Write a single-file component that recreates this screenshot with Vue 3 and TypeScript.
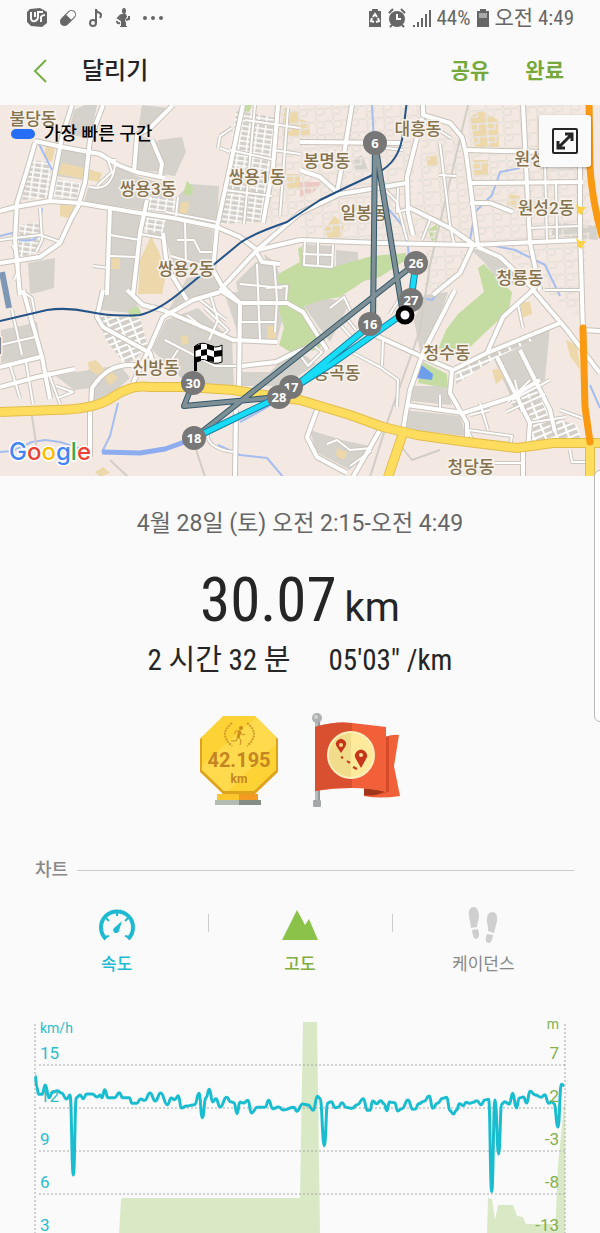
<script setup lang="ts">
import { ref } from 'vue'

type Point = [number, number]

interface Area { kind: string; points: string }
interface Label { text: string; x: number; y: number }
interface Marker { km: number; x: number; y: number }

const areas: Area[] = [
  { kind: 'urban', points: '85,105 97,105 90,139 68,134 74,110' },
  { kind: 'urban', points: '62,145 88,150 84,180 56,176' },
  { kind: 'urban', points: '137,135 158,142 161,172 136,170' },
  { kind: 'urban', points: '142,105 168,108 150,128 138,130' },
  { kind: 'urban', points: '158,140 182,137 186,152 175,176 162,174' },
  { kind: 'urban', points: '88,188 105,186 118,165 136,176 172,186 174,214 84,202' },
  { kind: 'urban', points: '190,184 219,186 217,224 178,215 178,196' },
  { kind: 'urban', points: '112,211 140,215 133,292 109,292' },
  { kind: 'urban', points: '145,214 213,230 211,266 176,272 166,240 148,234' },
  { kind: 'urban', points: '28,263 55,258 54,288 40,292 30,294' },
  { kind: 'urban', points: '264,254 275,262 285,292 274,294' },
  { kind: 'urban', points: '105,290 127,290 138,305 130,313 101,310' },
  { kind: 'urban', points: '166,320 198,308 232,340 234,388 190,386 152,350' },
  { kind: 'urban', points: '187,278 212,274 226,294 196,298 166,314' },
  { kind: 'urban', points: '236,282 256,262 274,262 285,285 287,303 240,303' },
  { kind: 'urban', points: '224,292 275,292 285,310 277,340 240,340' },
  { kind: 'urban', points: '25,325 37,322 42,355 1,363 1,330' },
  { kind: 'urban', points: '56,376 88,370 120,365 130,378 112,394 92,404 92,388 74,390' },
  { kind: 'urban', points: '242,372 270,372 284,358 306,356 316,364 284,386 242,386' },
  { kind: 'urban', points: '304,306 324,298 350,302 330,342 318,326' },
  { kind: 'urban', points: '409,386 446,386 452,405 410,401' },
  { kind: 'urban', points: '405,410 460,416 466,436 404,429' },
  { kind: 'urban', points: '492,355 550,326 545,380 512,400' },
  { kind: 'urban', points: '467,246 490,256 510,265 520,287 498,280 484,262' },
  { kind: 'urban', points: '310,430 342,440 370,446 350,470 316,452' },
  { kind: 'urban', points: '336,250 358,252 358,266 336,266' },
  { kind: 'urban', points: '304,244 332,246 332,266 304,264' },
  { kind: 'urban', points: '350,160 362,155 368,169 356,170' },
  { kind: 'urban', points: '552,222 596,226 598,240 552,236' },
  { kind: 'urban', points: '424,295 448,292 436,330 420,352 414,320' },
  { kind: 'sand', points: '46,145 55,149 52,162 44,158' },
  { kind: 'sand', points: '62,163 84,168 102,173 99,182 58,174' },
  { kind: 'sand', points: '60,204 76,206 68,218 60,216' },
  { kind: 'sand', points: '181,202 189,202 187,216 179,214' },
  { kind: 'sand', points: '151,236 159,252 166,275 162,294 138,294 140,260' },
  { kind: 'sand', points: '111,256 120,258 120,269 110,269' },
  { kind: 'sand', points: '244,144 253,146 252,153 243,152' },
  { kind: 'sand', points: '284,108 300,112 300,138 282,134' },
  { kind: 'sand', points: '286,174 300,174 300,190 286,188' },
  { kind: 'sand', points: '229,213 242,213 240,221 227,220' },
  { kind: 'sand', points: '300,119 309,122 310,135 300,138' },
  { kind: 'sand', points: '470,117 480,110 498,120 499,147 475,147' },
  { kind: 'sand', points: '474,160 488,160 488,176 474,176' },
  { kind: 'sand', points: '426,157 436,155 438,165 428,168' },
  { kind: 'sand', points: '508,194 520,196 518,208 507,206' },
  { kind: 'sand', points: '324,230 334,216 344,224 342,238 330,242' },
  { kind: 'sand', points: '88,362 96,360 105,370 98,375 89,370' },
  { kind: 'sand', points: '104,376 112,372 118,378 110,386' },
  { kind: 'sand', points: '180,337 187,335 189,343 182,345' },
  { kind: 'sand', points: '268,326 276,326 276,340 267,340' },
  { kind: 'sand', points: '520,302 530,302 532,314 522,318' },
  { kind: 'sand', points: '492,370 502,368 504,378 496,384' },
  { kind: 'sand', points: '337,448 347,452 344,460 336,456' },
  { kind: 'sand', points: '566,340 577,345 580,370 570,356' },
  { kind: 'sand', points: '95,472 103,467 110,473 100,477' },
  { kind: 'park', points: '275,280 280,273 300,262 298,249 302,246 304,265 333,267 372,256 406,253 406,260 380,277 364,281 340,297 322,300 304,306 312,322 325,340 318,350 290,352 279,345 284,328 278,306 287,303 286,288' },
  { kind: 'park', points: '478,268 484,264 498,279 512,292 509,310 488,330 470,347 437,352 446,330 458,314 484,292' },
  { kind: 'park', points: '423,362 447,374 448,388 418,383' },
  { kind: 'park', points: '428,230 437,224 438,236 432,242' },
  { kind: 'park', points: '187,181 193,187 192,196 183,194' },
  { kind: 'park', points: '244,105 252,105 249,112 244,111' },
  { kind: 'park', points: '128,310 138,306 142,315 130,318' },
  { kind: 'rose', points: '300,182 322,182 314,192 300,197' },
  { kind: 'water', points: '419,363 433,374 432,380 416,378' },
]

const blocks: Area[] = [
  { kind: 'tight', points: '33,160 52,163 48,198 20,200' },
  { kind: 'tight', points: '54,178 82,184 78,200 52,197' },
  { kind: 'tight', points: '143,216 166,220 162,234 142,230' },
  { kind: 'tight', points: '146,196 176,200 174,212 145,210' },
  { kind: 'tight', points: '236,110 276,118 262,222 220,224' },
  { kind: 'tight', points: '20,225 42,222 40,252 18,258' },
  { kind: 'slant', points: '97,316 140,318 148,348 126,366 106,340' },
  { kind: 'slant', points: '457,366 486,352 534,330 538,338 496,358 456,384' },
  { kind: 'slant', points: '505,400 540,382 556,420 576,424 582,440 530,444 534,420' },
  { kind: 'loose', points: '276,105 300,105 300,212 264,226' },
  { kind: 'loose', points: '300,105 420,105 408,240 300,238' },
  { kind: 'loose', points: '424,122 460,140 476,246 412,238' },
  { kind: 'loose', points: '466,105 588,105 590,240 480,245' },
  { kind: 'loose', points: '500,246 586,244 584,320 540,288' },
  { kind: 'loose', points: '418,250 468,250 452,284 425,292' },
]

const minorRoads: string[] = [
  'M0,240 L15,238 40,235 60,242', 'M40,208 L42,240 36,252', 'M12,245 Q24,262 14,280',
  'M110,235 L140,240', 'M110,256 L136,257', 'M93,266 L110,268', 'M140,234 L163,238',
  'M185,220 L186,266', 'M177,240 L194,240 200,252 212,252', 'M171,256 L211,268',
  'M230,150 L275,160', 'M225,190 L272,196', 'M220,136 L232,128 M220,148 L230,152 M220,136 L218,148',
  'M245,120 L300,128', 'M255,105 L244,224', 'M288,108 L280,215', 'M273,150 L300,154',
  'M97,186 L112,172 108,160 116,160', 'M115,165 Q112,192 90,187', 'M178,197 L176,216', 'M166,212 L217,222',
  'M305,240 L304,265 332,267 333,245', 'M318,242 L318,266', 'M303,254 L332,255',
  'M380,185 L397,202 407,240', 'M398,188 L397,212 412,208', 'M386,148 L403,150',
  'M440,144 L450,225 454,244', 'M423,120 L451,138', 'M439,175 L456,176', 'M430,220 L422,240',
  'M545,163 L547,240', 'M556,182 L557,240', 'M528,228 L580,226', 'M530,207 L552,206',
  'M20,290 L32,298 35,315', 'M12,310 L22,355 M0,345 L35,337', 'M10,365 L20,398 M26,362 L33,404',
  'M48,372 L60,404', 'M56,386 L73,392 58,398', 'M165,340 L215,366 236,366', 'M187,315 L200,325 M178,350 L166,368',
  'M211,297 L218,320 209,340', 'M240,284 L282,288 M257,264 L260,340 M274,262 L277,300 275,332', 'M240,322 L276,322', 'M200,300 L226,320',
  'M205,308 L228,330 222,336 210,330', 'M266,288 L287,286 286,300',
  'M233,452 Q205,448 208,432', 'M353,353 L380,367 398,380 397,407', 'M383,340 L382,366', 'M300,355 L308,366 322,352 314,346',
  'M330,308 L344,297 352,314 M338,322 L352,338 M356,330 L345,316',
  'M404,292 L390,314', 'M440,395 L440,410', 'M480,403 L488,430', 'M470,415 L490,410 M468,430 L512,436 510,446 472,440 Z',
  'M508,402 L530,380 M506,412 L545,394 M515,380 L522,412', 'M528,423 L566,417 M560,410 L582,418',
  'M550,380 L512,400', 'M327,444 L337,440 350,450 372,448', 'M350,466 L371,451', 'M570,450 L572,462 590,462',
  'M495,463 L523,463', 'M518,305 L523,328', 'M545,290 L583,290',
]

const mainRoads: string[] = [
  'M35,141 L62,147 100,154 118,165 136,172 165,178', 'M0,211 L15,207 50,201 80,203 133,212 173,218 217,227 240,237 257,250 300,240',
  'M72,105 L62,137 50,199', 'M103,105 L90,140 85,183 79,203', 'M35,143 L28,167 17,203 15,240 20,295', 'M0,263 L40,257 60,243 72,217 80,203',
  'M110,207 L107,295', 'M147,200 L140,233 133,295', 'M173,105 L150,128 137,135 134,172', 'M152,140 L162,164 160,176',
  'M243,105 L230,167 217,227 213,270', 'M278,105 L273,167 263,223', 'M257,250 L220,290', 'M213,270 L222,286 240,303',
  'M255,250 L262,262 280,264', 'M163,233 L167,267 187,300', 'M352,105 L343,160 337,193', 'M300,170 L320,177 338,193', 'M257,250 L300,213 340,194 383,187 407,183',
  'M423,105 L423,115 450,123 462,137 466,153 470,183 478,247', 'M422,118 L407,177 408,213 413,235', 'M467,150 L540,152', 'M523,105 L530,243 540,290',
  'M470,183 L583,182', 'M580,163 L580,233 583,330', 'M300,240 L380,243 473,245 580,240', 'M473,245 L460,273 433,295', 'M477,247 L500,257 517,273 535,290',
  'M408,207 L450,228 473,244', 'M300,142 L403,143', 'M470,203 L490,203 513,212', 'M23,290 L42,357 50,399', 'M0,367 L40,357', 'M0,387 L37,377 75,369',
  'M103,290 L97,317 103,327 150,353 155,370', 'M127,290 L143,305 163,310 233,340 277,342', 'M220,292 L193,300 163,317 150,347 133,383', 'M220,290 L240,303 287,303 303,312 327,350',
  'M240,303 L239,389', 'M242,366 L276,362 292,354 306,348', 'M140,366 Q110,360 92,388 L91,407', 'M90,410 L90,457', 'M455,290 L423,353 410,390 403,430',
  'M370,333 L425,358 453,370 487,353 503,317 533,290 567,330 600,373', 'M487,353 L560,323', 'M497,357 L530,423 528,447', 'M520,350 L550,410 555,432',
  'M452,370 L450,393 467,423 467,440', 'M407,405 L463,413 510,398 540,380', 'M523,450 L523,477', 'M317,410 L307,437 317,457 347,473', 'M380,430 L353,477', 'M236,410 L235,477', 'M583,330 L600,331',
]

const highways: string[] = [
  'M0,412 L53,410 Q95,410 113,397 T150,387 L187,387 233,390 277,397 300,400 350,415 383,427 417,435 467,442 517,448 553,443 600,443',
  'M403,433 L388,477', 'M590,443 L590,477',
]

const streams: string[] = [
  'M372,105 L375,160 385,205 402,225 408,246 409,260', 'M520,168 L500,172 492,195 475,212 470,240', 'M490,245 L515,250 545,265 560,296',
  'M39,144 L52,170', 'M42,208 L40,222', 'M0,236 L12,233 20,240 Q34,242 38,236', 'M118,403 L110,436 102,452',
  'M0,452 L12,451 32,442 45,440 60,442 85,450', 'M218,445 L240,455 267,458 284,478', 'M590,385 L600,408', 'M450,278 L432,300 412,296',
  'M240,422 L262,410 276,402',
]

const placeLabels: Label[] = [
  { text: '불당동', x: 33, y: 125 }, { text: '쌍용3동', x: 148, y: 195 }, { text: '쌍용1동', x: 257, y: 183 },
  { text: '쌍용2동', x: 186, y: 275 }, { text: '대흥동', x: 418, y: 135 }, { text: '봉명동', x: 327, y: 167 },
  { text: '일봉동', x: 364, y: 219 }, { text: '원성동', x: 538, y: 165 }, { text: '원성2동', x: 546, y: 214 },
  { text: '청룡동', x: 520, y: 284 }, { text: '청수동', x: 447, y: 359 }, { text: '용곡동', x: 337, y: 379 },
  { text: '신방동', x: 156, y: 374 }, { text: '청당동', x: 471, y: 473 }, { text: '리', x: -5, y: 352 },
]

const markers: Marker[] = [
  { km: 6, x: 375, y: 143 }, { km: 26, x: 416, y: 263 }, { km: 27, x: 411, y: 300 }, { km: 16, x: 370, y: 324 },
  { km: 17, x: 291, y: 387 }, { km: 28, x: 279, y: 397 }, { km: 18, x: 194, y: 438 }, { km: 30, x: 193, y: 383 },
]

const SAMPLES_PER_PIXEL = 3
const speedSamples: Point[] = [
  [106, 212], [110, 245], [116, 268], [126, 268], [136, 240], [147, 278], [158, 262], [172, 257], [184, 264], [200, 282], [210, 270],
  [220, 510], [229, 278], [240, 270], [250, 281], [260, 267], [276, 267], [292, 276], [300, 270], [306, 278], [314, 254], [324, 278], [344, 278], [358, 263], [368, 278], [388, 278],
  [396, 295], [410, 295], [422, 282], [434, 286], [450, 264], [466, 288], [482, 264], [502, 299], [514, 279], [524, 284], [535, 272], [544, 309], [560, 303], [584, 299],
  [597, 265], [607, 338], [618, 278], [628, 253], [638, 291], [648, 281], [660, 306], [680, 277], [692, 290], [702, 293], [711, 326], [720, 291], [730, 294], [744, 286], [754, 324], [772, 307], [796, 306], [806, 286],
  [818, 311], [836, 306], [850, 315], [882, 307], [890, 319], [908, 297], [924, 300], [940, 316], [952, 274], [960, 280], [973, 422], [983, 294], [994, 290],
  [1005, 308], [1014, 307], [1026, 293], [1038, 307], [1056, 310], [1072, 299], [1090, 281], [1102, 316], [1110, 316], [1118, 288], [1130, 296], [1142, 287],
  [1152, 296], [1161, 317], [1168, 291], [1184, 293], [1193, 318], [1206, 311], [1224, 285], [1238, 313], [1246, 312], [1256, 296], [1272, 289], [1288, 273], [1298, 310],
  [1312, 295], [1328, 280], [1340, 277], [1350, 317], [1360, 327], [1370, 315], [1378, 296], [1390, 302], [1398, 292], [1410, 295], [1420, 292], [1430, 287], [1444, 299], [1454, 285], [1466, 283],
  [1475, 560], [1485, 285], [1496, 447], [1505, 297], [1514, 290], [1528, 297], [1538, 265], [1549, 309], [1558, 279], [1570, 276], [1580, 294], [1590, 259],
  [1606, 270], [1624, 277], [1634, 269], [1646, 295], [1656, 290], [1662, 296], [1674, 366], [1684, 238], [1693, 242],
]

function smoothPath(points: Point[]): string {
  const at = (i: number) => points[i].map(v => v / SAMPLES_PER_PIXEL)
  let d = `M${at(0).join(',')}`
  for (let i = 1; i < points.length; i++) {
    const [x0, y0] = at(i - 1)
    const [x1, y1] = at(i)
    const mid = (x0 + x1) / 2
    d += ` C${mid},${y0} ${mid},${y1} ${x1},${y1}`
  }
  return d
}

const speedPath = smoothPath(speedSamples)

const gridRows = [
  { y: 60, speed: '15', altitude: '7' },
  { y: 103, speed: '12', altitude: '2' },
  { y: 146, speed: '9', altitude: '-3' },
  { y: 189, speed: '6', altitude: '-8' },
  { y: 232, speed: '3', altitude: '-13' },
]

const tabs = [
  { id: 'speed', label: '속도' },
  { id: 'altitude', label: '고도' },
  { id: 'cadence', label: '케이던스' },
]
const active = ref<Record<string, boolean>>({ speed: true, altitude: true, cadence: false })
function toggle(id: string) {
  active.value[id] = !active.value[id]
}
</script>

<template>
  <div class="screen">
    <div class="status-bar">
      <div class="status-left">
        <svg width="22" height="20" viewBox="0 0 22 20">
          <path class="ink" d="M4 1 L14 0 21 4 V15 L16 19 5 18 1 14 V4 Z" />
          <path d="M5 4 V10 Q5 14 9 13 Q12 12 12 9 V4 H17 M9 4 V9 M15 14 V9 Q16 7 19 7" fill="none" stroke="#fafafa" stroke-width="2" />
        </svg>
        <svg width="18" height="18" viewBox="0 0 18 18">
          <g transform="rotate(45 9 9)">
            <rect x="5" y="0" width="8" height="18" rx="4" fill="none" stroke="#666" stroke-width="1" />
            <path class="ink" d="M5 8 H13 V14 A4 4 0 0 1 5 14 Z" />
          </g>
        </svg>
        <svg width="16" height="20" viewBox="0 0 16 20">
          <circle cx="5" cy="15" r="3" fill="none" stroke="#666" stroke-width="2" />
          <path d="M8 15 V1 Q8 4 12 5 Q14 7 12 10" fill="none" stroke="#666" stroke-width="2" />
        </svg>
        <svg width="16" height="20" viewBox="0 0 16 20">
          <ellipse class="ink" cx="9" cy="3" rx="2" ry="3" />
          <path class="ink" d="M6 6 H11 L12 9 10 12 11 15 V18 H12 V19 H5 V18 H6 V14 Q4 10 6 6 Z" />
          <path d="M6 7 L3 10 6 12 M11 12 L14 11 14 8 M2 13 Q2 16 5 15" fill="none" stroke="#666" stroke-width="2" />
        </svg>
        <svg class="more-dots" width="22" height="20" viewBox="0 0 22 20">
          <circle cx="3" cy="10" r="2" /><circle cx="11" cy="10" r="2" /><circle cx="19" cy="10" r="2" />
        </svg>
      </div>
      <div class="status-right">
        <svg width="14" height="20" viewBox="0 0 14 20">
          <path class="ink" d="M4 1 H10 V3 H13 V19 H1 V3 H4 Z" />
          <path d="M5 9 L7 6 9 9 M10 10 L11 13 8 14 M6 14 L3 13 4 10" fill="none" stroke="#fafafa" stroke-width="2" />
        </svg>
        <svg width="20" height="20" viewBox="0 0 20 20">
          <circle class="ink" cx="10" cy="11" r="8" />
          <path d="M2 5 L6 1 M18 5 L14 1 M5 17 L3 19 M15 17 L17 19" stroke="#666" stroke-width="2" />
          <path d="M10 6 V11 H14" fill="none" stroke="#fafafa" stroke-width="2" />
        </svg>
        <svg width="20" height="20" viewBox="0 0 20 20">
          <path d="M2 19 V17 M6 19 V14 M10 19 V10 M14 19 V6 M18 19 V2" stroke="#666" stroke-width="2" />
        </svg>
        <span>44%</span>
        <svg width="14" height="20" viewBox="0 0 14 20">
          <path class="ink" d="M4 1 H10 V3 H13 V19 H1 V3 H4 Z" />
          <path d="M3 5 H11 V10 H3 Z" fill="#aaa" />
        </svg>
        <span>오전 4:49</span>
      </div>
    </div>

    <header class="app-bar">
      <button class="back" type="button" aria-label="뒤로">
        <svg width="16" height="24" viewBox="0 0 16 24">
          <path d="M14 1 L3 12 14 23" fill="none" stroke="#76b043" stroke-width="2" />
        </svg>
      </button>
      <h1>달리기</h1>
      <button class="action" type="button">공유</button>
      <button class="action" type="button">완료</button>
    </header>

    <section class="map">
      <svg class="map-canvas" viewBox="0 105 600 371">
        <defs>
          <pattern id="tight" width="8" height="5" patternUnits="userSpaceOnUse" patternTransform="rotate(8)">
            <rect width="8" height="5" fill="#d3cfc8" /><path d="M0 0 H8 M0 0 V5" stroke="#fff" stroke-width="3" />
          </pattern>
          <pattern id="slant" width="11" height="6" patternUnits="userSpaceOnUse" patternTransform="rotate(-22)">
            <rect width="11" height="6" fill="#d3cfc8" /><path d="M0 0 H11 M0 0 V6" stroke="#fff" stroke-width="4" />
          </pattern>
          <pattern id="loose" width="17" height="13" patternUnits="userSpaceOnUse" patternTransform="rotate(-4)">
            <path d="M0 1 H17 M1 0 V13 M9 1 V7 M1 7 H9" fill="none" stroke="#d6ccc3" stroke-width="2" />
            <path d="M0 1 H17 M1 0 V13 M9 1 V7 M1 7 H9" fill="none" stroke="#faf6f0" stroke-width="1" />
          </pattern>
        </defs>
        <rect class="land" y="105" width="600" height="371" />
        <polygon v-for="(a, i) in areas" :key="'a' + i" :class="a.kind" :points="a.points" />
        <polygon v-for="(b, i) in blocks" :key="'b' + i" :class="b.kind" :points="b.points" />
        <path v-for="(d, i) in streams" :key="'s' + i" class="stream" :d="d" />
        <path class="river" d="M102,452 L140,453 165,449 190,440" />
        <path class="rail" d="M468,105 L430,265 420,330 388,420 370,477 M32,416 L37,450 M110,460 L128,477 M193,440 L205,477 M400,445 L412,460 440,450" />
        <path v-for="(d, i) in minorRoads" :key="'mc' + i" class="minor-case" :d="d" />
        <path v-for="(d, i) in mainRoads" :key="'rc' + i" class="main-case" :d="d" />
        <path v-for="(d, i) in minorRoads" :key="'m' + i" class="minor" :d="d" />
        <path v-for="(d, i) in mainRoads" :key="'r' + i" class="main" :d="d" />
        <path v-for="(d, i) in highways" :key="'hc' + i" class="highway-case" :d="d" />
        <path v-for="(d, i) in highways" :key="'h' + i" class="highway" :d="d" />
        <path class="trunk" d="M589,100 L590,167 Q592,200 602,236 M583,328 L585,407 590,442" />
        <path d="M2,272 L9,308" fill="none" stroke="#7d97b5" stroke-width="6" />
        <path class="railway" d="M0,321 L47,310 Q67,307 90,312 T140,315 Q160,310 183,290 L240,243 Q252,234 287,222 L320,200 347,187 377,173 Q400,162 403,133 L407,100" />
        <path d="M576,204 l4,3 6,0 -3,4 -1,4 -4,-2 z M576,238 l4,3 6,0 -3,4 -1,4 -4,-2 z" fill="#fbd145" />

        <text v-for="l in placeLabels" :key="l.text" class="place" :x="l.x" :y="l.y">{{ l.text }}</text>

        <g class="route">
          <path class="edge" d="M375,143 L373,324 M375,143 L403,314 M416,263 L194,438 M279,397 L184,406 193,383" />
          <path class="slow" d="M375,143 L373,324 M375,143 L403,314 M416,263 L194,438 M279,397 L184,406 193,383" />
          <path class="fast-edge" d="M194,438 L279,397 333,363 404,313 M291,390 L368,327 M416,263 L411,300" />
          <path class="fast" d="M194,438 L279,397 333,363 404,313 M291,390 L368,327 M416,263 L411,300" />
        </g>
        <g v-for="m in markers" :key="m.km" class="marker">
          <circle :cx="m.x" :cy="m.y" r="12" />
          <text :x="m.x" :y="m.y + 5">{{ m.km }}</text>
        </g>
        <circle cx="405" cy="315" r="7" fill="#fff" stroke="#000" stroke-width="5" />
        <g>
          <path d="M194,346 H197 V371 H194 Z" />
          <path d="M195,346 Q202,341 209,345 T222,345 V362 Q215,365 208,361 T195,363 Z" fill="#fff" stroke="#000" stroke-width="1" />
          <path d="M195,346 l6,-2 v5 l-6,2 z M207,344 l7,2 v5 l-7,-2 z M201,350 l6,-1 v6 l-6,1 z M214,351 l8,-1 v6 l-8,1 z M195,357 l6,-1 v5 l-6,2 z M207,355 l7,2 v5 l-7,-1 z" />
        </g>
        <text class="google" x="9" y="460"><tspan fill="#4285f4">G</tspan><tspan fill="#ea4335">o</tspan><tspan fill="#fbbc05">o</tspan><tspan fill="#4285f4">g</tspan><tspan fill="#34a853">l</tspan><tspan fill="#ea4335">e</tspan></text>
      </svg>
      <div class="legend"><i class="swatch"></i><span>가장 빠른 구간</span></div>
      <button class="expand" type="button" aria-label="지도 확대">
        <svg width="26" height="26" viewBox="0 0 26 26" fill="none" stroke="#252525">
          <rect x="1" y="1" width="24" height="24" rx="1" stroke-width="2" />
          <path d="M7 19 L19 7 M13 6 H20 V13 M6 13 V20 H13" stroke-width="3" />
        </svg>
      </button>
    </section>
    <div class="edge-handle"></div>

    <section class="summary">
      <p class="date">4월 28일 (토) 오전 2:15-오전 4:49</p>
      <p class="distance"><span class="value">30.07</span><span class="unit">km</span></p>
      <p class="pace"><span>2 시간 32 분</span><span>05'03" /km</span></p>
      <div class="badges">
        <svg width="80" height="96" viewBox="0 0 80 96">
          <rect x="18" y="82" width="41" height="8" fill="#fcc62d" /><rect x="40" y="82" width="19" height="8" fill="#f39a25" />
          <rect x="16" y="88" width="46" height="5" fill="#b4bbb1" /><rect x="40" y="88" width="22" height="5" fill="#858d87" />
          <polygon points="24,5 56,5 79,27 79,60 56,82 24,82 1,60 1,27" fill="#dfa21d" />
          <polygon points="24,4 56,4 77,25 77,58 55,79 25,79 3,58 3,25" fill="#fdd235" />
          <polygon points="58,5 77,25 77,32 29,79 25,79 3,58 3,53" fill="#ffdf5c" opacity="0.6" />
          <path d="M33 11 Q19 22 33 34 M48 11 Q62 22 48 34" fill="none" stroke="#d29a2a" stroke-width="2" stroke-dasharray="2 1" />
          <circle cx="42" cy="16" r="2" fill="#cc8d1d" />
          <path d="M41 18 L39 25 42 28 41 33 M39 25 L37 29 32 29 M41 19 L37 19 35 22 M41 20 L44 23 46 22" fill="none" stroke="#cc8d1d" stroke-width="1" />
          <path d="M41 19 L39 26" stroke="#cc8d1d" stroke-width="3" />
          <text class="medal-value" x="40" y="55">42.195</text>
          <text class="medal-unit" x="40" y="71">km</text>
        </svg>
        <svg width="90" height="96" viewBox="0 0 90 96">
          <rect x="3" y="9" width="5" height="80" fill="#b8bbbb" /><rect x="6" y="9" width="2" height="80" fill="#929797" />
          <circle cx="5" cy="6" r="5" fill="#aeb1b1" /><circle cx="4" cy="5" r="2" fill="#d3d5d5" />
          <rect x="1" y="88" width="8" height="7" rx="1" fill="#a4a8a8" />
          <path d="M73 25 Q81 22 87 23 L82 54 88 84 Q68 87 52 84 V77 L73 80 Z" fill="#f06139" />
          <path d="M73 25 L77 24 V80 L60 84 V77 L73 80 Z" fill="#d64c2a" />
          <path d="M52 76 L74 79 Q62 85 52 83 Z" fill="#9f3519" />
          <path d="M3 15 Q22 9 40 11 T74 15 V80 Q58 76 40 76 T3 79 Z" fill="#f16039" />
          <path d="M3 15 Q22 9 40 11 V76 Q22 75 3 79 Z" fill="#d95031" />
          <circle cx="39" cy="43" r="24" fill="#fff0bd" /><circle cx="39" cy="43" r="22" fill="#ffe99a" />
          <path d="M39 21 A22 22 0 0 0 39 65 Z" fill="#f0dc8b" />
          <path fill-rule="evenodd" d="M29 41 L25 35 A5 5 0 1 1 33 35 Z M29 31 A2 2 0 1 0 29 35 A2 2 0 0 0 29 31 Z M49 56 L44 47 A6 6 0 1 1 54 47 Z M49 41 A2 2 0 1 0 49 45 A2 2 0 0 0 49 41 Z" fill="#c7361b" />
          <path d="M29 45 L31 46 M35 49 L38 51 M41 55 L45 57" stroke="#c7361b" stroke-width="2" />
        </svg>
      </div>
    </section>

    <section class="charts">
      <h2>차트</h2>
      <div class="tabs">
        <button v-for="t in tabs" :key="t.id" type="button" class="tab" :class="t.id" :aria-pressed="active[t.id]" @click="toggle(t.id)">
          <svg v-if="t.id === 'speed'" width="38" height="38" viewBox="0 0 38 38">
            <path d="M8 33 A16 16 0 1 1 30 33" fill="none" stroke="#1fbad2" stroke-width="4" />
            <path d="M19 5 V10 M8 12 L11 15 M30 12 L27 15 M6 31 L11 30 M32 31 L27 30" stroke="#1fbad2" stroke-width="2" />
            <path d="M24 15 L21 25 A3 3 0 1 1 16 22 Z" fill="#1fbad2" />
          </svg>
          <svg v-else-if="t.id === 'altitude'" width="38" height="38" viewBox="0 0 38 38">
            <path d="M1 34 L16 4 24 19 28 13 37 34 Z" fill="#8bc34a" />
          </svg>
          <svg v-else width="38" height="38" viewBox="0 0 38 38" fill="#cfcfcf">
            <path d="M10 1 C4 1 4 8 6 15 L7 22 13 21 C13 17 15 14 15 9 Q14 1 10 1 Z M8 24 L14 23 Q17 32 12 33 Q9 33 8 24 Z" />
            <path d="M28 6 C34 6 34 14 32 19 L30 27 24 25 C25 21 22 17 23 12 Q24 6 28 6 Z M23 28 L29 29 Q28 38 24 37 Q20 36 23 28 Z" />
          </svg>
          <span>{{ t.label }}</span>
        </button>
      </div>
      <svg class="chart" viewBox="0 0 600 228" role="img" aria-label="속도와 고도 차트">
        <path class="altitude-area" d="M119,230 L121,195 Q121,193 123,193 L300,193 303,17 317,17 320,230 Z M487,230 L488,193 492,194 495,215 498,200 513,200 517,211 523,212 526,219 552,219 556,230 Z M555,230 L558,160 565,92 565,230 Z" />
        <path class="grid" d="M35,19 V230 M565,19 V230" />
        <path v-for="r in gridRows" :key="r.y" class="grid" :d="`M39,${r.y} H565`" />
        <path class="speed-line" :d="speedPath" />
        <text class="speed-text" x="40" y="28">km/h</text>
        <text class="altitude-text" x="559" y="24">m</text>
        <template v-for="r in gridRows" :key="r.speed">
          <text class="speed-text value" x="40" :y="r.y - 6">{{ r.speed }}</text>
          <text class="altitude-text value" x="559" :y="r.y - 6">{{ r.altitude }}</text>
        </template>
      </svg>
    </section>
  </div>
</template>

<style>
body {
  background: #fafafa;
}
</style>

<style scoped>
.screen {
  position: relative;
  overflow: hidden;
  background: #fafafa;
  color: #252525;
  font-family: Roboto, "Noto Sans CJK KR", sans-serif;
}
button {
  padding: 0;
  border: 0;
  background: none;
  font-family: inherit;
  cursor: pointer;
}
h1, h2, p {
  margin: 0;
}
svg {
  display: block;
}
.status-bar {
  display: flex;
  justify-content: space-between;
  align-items: center;
  height: 36px;
  padding: 0 26px;
  color: #666;
  font-family: "Roboto Condensed", Roboto, "Noto Sans CJK KR", sans-serif;
  font-size: 21px;
  line-height: 36px;
}
.status-left {
  display: flex;
  align-items: center;
  gap: 11px;
}
.status-right {
  display: flex;
  align-items: center;
  gap: 5px;
}
.ink, .more-dots {
  fill: #666;
}
.app-bar {
  display: flex;
  align-items: center;
  height: 69px;
  padding: 0 36px 0 32px;
}
.back {
  width: 50px;
}
.app-bar h1 {
  flex: 1;
  font-size: 24px;
  font-weight: 500;
  line-height: 32px;
}
.action {
  margin-left: 36px;
  color: #76a83c;
  font-size: 21px;
  font-weight: 700;
  line-height: 32px;
}
.map {
  position: relative;
}
.map-canvas {
  width: 100%;
}
.land { fill: #f3e9e2; }
.urban { fill: #d5d2cb; }
.sand { fill: #ecd8aa; }
.park { fill: #c4dba2; }
.rose { fill: #ecc9c4; }
.water { fill: #6f9fec; }
.tight { fill: url(#tight); }
.slant { fill: url(#slant); }
.loose { fill: url(#loose); }
.stream, .river, .rail, .minor-case, .main-case, .minor, .main, .highway-case, .highway, .trunk, .railway, .route path {
  fill: none;
  stroke-linejoin: round;
}
.stream { stroke: #a6bdf0; stroke-width: 2; }
.river { stroke: #8eacf0; stroke-width: 5; }
.rail { stroke: #d2cdc7; stroke-width: 2; }
.minor-case { stroke: #cbc6be; stroke-width: 4; }
.minor { stroke: #fff; stroke-width: 2; }
.main-case { stroke: #c8c3bb; stroke-width: 6; }
.main { stroke: #fff; stroke-width: 4; }
.highway-case { stroke: #e3bd4b; stroke-width: 10; }
.highway { stroke: #fddc5e; stroke-width: 8; }
.trunk { stroke: #f99a12; stroke-width: 7; stroke-linecap: round; }
.railway { stroke: #245388; stroke-width: 2; }
.place {
  fill: #85734f;
  stroke: #f8f2ec;
  stroke-width: 3px;
  paint-order: stroke;
  font-size: 17px;
  font-weight: 500;
  text-anchor: middle;
}
.route .edge { stroke: #33586b; stroke-width: 6; }
.route .slow { stroke: #7f8f96; stroke-width: 4; }
.route .fast-edge { stroke: #1d7fa0; stroke-width: 7; }
.route .fast { stroke: #16dcf7; stroke-width: 5; }
.marker circle {
  fill: #777;
}
.marker text {
  fill: #fff;
  font-family: "Open Sans", sans-serif;
  font-size: 13px;
  font-weight: 700;
  text-anchor: middle;
}
.google {
  stroke: #fff;
  stroke-width: 3px;
  paint-order: stroke;
  font-family: Inter, sans-serif;
  font-size: 24px;
  font-weight: 500;
}
.legend {
  position: absolute;
  top: 16px;
  left: 11px;
  display: flex;
  align-items: center;
  gap: 9px;
  color: #000;
  font-size: 18px;
  font-weight: 500;
  line-height: 26px;
}
.swatch {
  width: 24px;
  height: 10px;
  border-radius: 5px;
  background: #256ef5;
}
.expand {
  position: absolute;
  top: 10px;
  right: 9px;
  display: grid;
  place-items: center;
  width: 52px;
  height: 52px;
  border-radius: 3px;
  background: #fafafa;
  box-shadow: 0 1px 3px rgba(0, 0, 0, 0.3);
}
.edge-handle {
  position: absolute;
  top: 470px;
  right: -8px;
  width: 14px;
  height: 252px;
  box-sizing: border-box;
  border: 1px solid #b8b8b8;
  border-radius: 6px;
  background: #fff;
}
.summary {
  padding-top: 32px;
  text-align: center;
}
.date {
  color: #666;
  font-size: 23px;
  line-height: 32px;
}
.distance {
  display: flex;
  justify-content: center;
  align-items: baseline;
  gap: 8px;
  margin-top: 24px;
  line-height: 72px;
}
.distance .value {
  font-family: "Roboto Condensed", Roboto, sans-serif;
  font-size: 61px;
}
.distance .unit {
  font-size: 40px;
}
.pace {
  display: flex;
  justify-content: center;
  gap: 38px;
  margin-top: -4px;
  font-family: "Roboto Condensed", Roboto, "Noto Sans CJK KR", sans-serif;
  font-size: 29px;
  line-height: 40px;
}
.badges {
  display: flex;
  justify-content: center;
  gap: 33px;
  margin-top: 32px;
}
.medal-value, .medal-unit {
  fill: #c48522;
  font-weight: 700;
  text-anchor: middle;
}
.medal-value {
  font-size: 20px;
}
.medal-unit {
  font-size: 12px;
}
.charts {
  padding-top: 48px;
}
.charts h2 {
  display: flex;
  align-items: center;
  gap: 9px;
  padding: 0 26px 0 35px;
  color: #888;
  font-size: 18px;
  font-weight: 500;
  line-height: 28px;
}
.charts h2::after {
  content: "";
  flex: 1;
  height: 1px;
  background: #ccc;
}
.tabs {
  display: grid;
  grid-template-columns: repeat(3, 1fr);
  margin: 22px 25px 0;
}
.tab {
  position: relative;
  display: flex;
  flex-direction: column;
  align-items: center;
  gap: 8px;
  color: #888;
  font-size: 17px;
  line-height: 24px;
}
.tab + .tab::before {
  content: "";
  position: absolute;
  top: 8px;
  left: 0;
  width: 1px;
  height: 18px;
  background: #ccc;
}
.tab.speed {
  color: #1fbad2;
  font-weight: 500;
}
.tab.altitude {
  color: #7fae3e;
  font-weight: 500;
}
.chart {
  width: 100%;
  margin-top: 29px;
}
.altitude-area {
  fill: #d9e8c5;
}
.grid {
  fill: none;
  stroke: #a8a8a8;
  stroke-width: 1;
  stroke-dasharray: 2 2;
}
.speed-line {
  fill: none;
  stroke: #1abdd0;
  stroke-width: 3;
  stroke-linejoin: round;
}
.speed-text, .altitude-text {
  font-size: 14px;
}
.value.speed-text, .value.altitude-text {
  font-size: 17px;
}
.speed-text {
  fill: #2bbdcb;
}
.altitude-text {
  fill: #82b04e;
  text-anchor: end;
}
</style>
